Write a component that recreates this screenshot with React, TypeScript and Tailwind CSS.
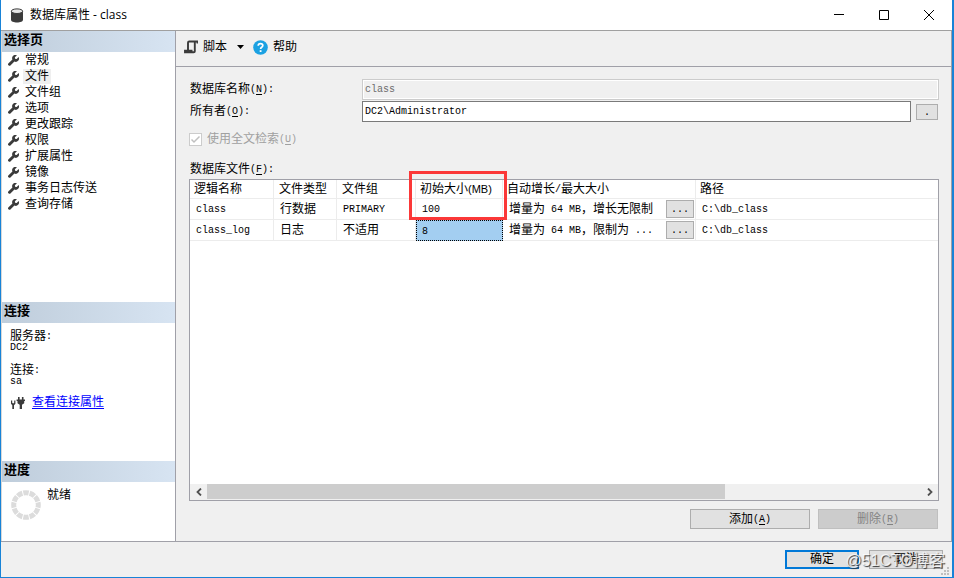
import { Fragment, type ReactNode } from 'react';

const pages = ['常规', '文件', '文件组', '选项', '更改跟踪', '权限', '扩展属性', '镜像', '事务日志传送', '查询存储'];

const files = [
  { name: 'class', type: '行数据', group: 'PRIMARY', size: '100', growth: ['增量为', ' 64 MB', '\uff0c增长无限制'], path: 'C:\\db_class' },
  { name: 'class_log', type: '日志', group: '不适用', size: '8', growth: ['增量为', ' 64 MB', '\uff0c限制为', ' ...'], path: 'C:\\db_class' },
];

const cell = 'border-r border-b border-[#ececec] p-0 pl-[6px] text-left font-normal whitespace-nowrap overflow-hidden';

// Half-width text sits in a smaller monospace next to the 12px Chinese glyphs
function Latin({ children }: { children: ReactNode }) {
  return <span className="align-[1px] font-['Liberation_Mono',monospace] text-[10px] leading-none whitespace-pre">{children}</span>;
}

function Key({ letter, colon }: { letter: string; colon?: boolean }) {
  return (
    <Latin>
      (<u className="underline-offset-2">{letter}</u>){colon && ':'}
    </Latin>
  );
}

function WrenchIcon() {
  return (
    <svg className="mr-1 size-[11px] text-[#3b3b3b]" viewBox="0 0 12 12" fill="currentColor">
      <path d="M9.800.400A3.500 3.500 0 0 0 4.800 4.800L.600 8.900A1.500 1.500 0 0 0 2.900 11.300L7 7.100A3.500 3.500 0 0 0 11.600 2.300L9.500 4.400L7.700 4.200L7.500 2.500z" />
    </svg>
  );
}

function PanelTitle({ children }: { children: ReactNode }) {
  return (
    <h2 className="h-[21px] bg-linear-to-r from-[#bfcddb] to-[#d7e4f2] pl-[2px] text-[13px] leading-[18px] font-bold">
      {children}
    </h2>
  );
}

function TitleBar() {
  return (
    <header className="flex h-[31px] items-center border-b border-[#a0a0a0] bg-white pl-[9px]">
      <svg className="mr-[6px] h-[15px] w-[14px]" viewBox="0 0 14 15">
        <path d="M1 3.200v8.600C1 13.500 3.700 14.600 7 14.600s6-1.100 6-2.800V3.200z" fill="#3b3b3b" />
        <ellipse cx="7" cy="3.200" rx="5.700" ry="2.300" fill="#e6e6e6" stroke="#3b3b3b" />
      </svg>
      <h1 className="flex-1 font-['Open_Sans','Noto_Sans_CJK_SC',sans-serif] text-[12px] leading-[16px]">数据库属性 - class</h1>
      <div className="flex">
        <button aria-label="最小化" className="flex h-[29px] w-[45px] items-center justify-center">
          <svg width="10" height="10" viewBox="0 0 10 10" stroke="#000"><path d="M0 4.500h10" /></svg>
        </button>
        <button aria-label="最大化" className="flex h-[29px] w-[45px] items-center justify-center">
          <svg width="10" height="10" viewBox="0 0 10 10" stroke="#000" fill="none"><path d="M.5.5h9v9h-9z" /></svg>
        </button>
        <button aria-label="关闭" className="flex h-[29px] w-[46px] items-center justify-center">
          <svg width="10" height="10" viewBox="0 0 10 10" stroke="#000"><path d="M0 0l10 10M10 0L0 10" /></svg>
        </button>
      </div>
    </header>
  );
}

function Sidebar() {
  return (
    <aside className="flex w-[175px] shrink-0 flex-col border-r border-l border-[#a0a0a8] border-l-[#d8d8d8] bg-white">
      <PanelTitle>选择页</PanelTitle>
      <nav className="flex-1">
        <ul>
          {pages.map((page) => (
            <li key={page} className="flex h-4 items-center pl-[6px]">
              <WrenchIcon />
              <button className={page === '文件' ? 'bg-[#efefef] px-[2px] leading-[15px]' : 'px-[2px] leading-[15px]'}>{page}</button>
            </li>
          ))}
        </ul>
      </nav>

      <PanelTitle>连接</PanelTitle>
      <div className="h-[138px] pt-[7px] pl-2">
        <p className="leading-[12px]">服务器<Latin>:</Latin></p>
        <p className="flex h-[12px] items-center"><Latin>DC2</Latin></p>
        <p className="mt-[10px] leading-[12px]">连接<Latin>:</Latin></p>
        <p className="flex h-[12px] items-center"><Latin>sa</Latin></p>
        <p className="mt-[6px] flex items-center gap-[7px]">
          <svg className="mt-px h-[14px] w-[15px]" viewBox="0 0 15 14" fill="#3b3b3b">
            <path d="M1 4.500h1.200v2.300l1 .7 1-.7V4.500h1.200v3.300L4 9.200V13H2.300V9.200L1 7.800z" />
            <path d="M8 1h1.600v2.500h2.300V1h1.600v2.500H15V5h-.8v2.300L12 8.800V13H9.700V8.800L7.500 7.300V5h-.9V3.500H8z" />
          </svg>
          <a href="#connection" className="leading-[16px] text-[#0000ff] underline underline-offset-2">查看连接属性</a>
        </p>
      </div>

      <PanelTitle>进度</PanelTitle>
      <div className="flex h-[59px] gap-[6px] pt-[6px] pl-[9px]">
        <svg className="mt-[2px] size-[30px]" viewBox="0 0 30 30">
          <circle cx="15" cy="15" r="12.300" fill="none" stroke="#dcdcdc" strokeWidth="5" pathLength="120" strokeDasharray="8.500 1.500" strokeDashoffset="4.250" />
        </svg>
        <span className="leading-[15px]">就绪</span>
      </div>
    </aside>
  );
}

function Toolbar() {
  return (
    <div className="flex h-[36px] items-center border-b border-[#a0a0a8] pb-[3px] pl-[8px]">
      <button className="flex items-center gap-[5px]">
        <svg width="14" height="14" viewBox="0 0 14 14" fill="none" stroke="#3b3b3b" strokeWidth="1.900">
          <path d="M13.500 3.500V1.500H5.200Q4 1.500 4 2.700V10.500" />
          <path d="M10.800 1.800V11.200Q10.800 12.300 9.700 12.300H1V10.800H8.500" />
        </svg>
        脚本
      </button>
      <button aria-label="脚本选项" className="ml-[9px] flex h-5 w-[9px] items-center justify-center">
        <svg width="7" height="4" viewBox="0 0 7 4"><path d="M0 0h7L3.500 4z" /></svg>
      </button>
      <button className="ml-[8px] flex items-center gap-[5px]">
        <svg width="15" height="15" viewBox="0 0 15 15">
          <circle cx="7.500" cy="7.500" r="7.300" fill="#1ba1e2" />
          <path d="M5.200 5.800Q5.200 3.700 7.500 3.700T9.800 5.600Q9.800 6.600 8.700 7.300T7.600 9" fill="none" stroke="#fff" strokeWidth="1.700" />
          <path d="M6.700 10.200h1.800v1.800H6.700z" fill="#fff" />
        </svg>
        帮助
      </button>
    </div>
  );
}

function FileGrid() {
  return (
    <div className="flex flex-1 flex-col border border-[#a0a0a8] bg-white">
      <div className="flex-1">
        <table aria-labelledby="files-label" className="w-full table-fixed border-separate border-spacing-0">
          <thead>
            <tr className="h-[19px] leading-[16px]">
              <th className={`${cell} w-[84px] !pl-[4px]`}>逻辑名称</th>
              <th className={`${cell} w-[63px] !pl-[5px]`}>文件类型</th>
              <th className={`${cell} w-[79px] !pl-[5px]`}>文件组</th>
              <th className={`${cell} relative w-[87px] !overflow-visible !pl-[4px]`}>
                初始大小<span className="text-[11px] leading-none">(MB)</span>
                <span className="pointer-events-none absolute -top-[9px] -left-[7px] h-[49px] w-[98px] border-3 border-[#fb3838]" />
              </th>
              <th className={`${cell} w-[193px] !pl-[4px]`}>自动增长<Latin>/</Latin>最大大小</th>
              <th className={`${cell} border-r-0 !pl-[4px]`}>路径</th>
            </tr>
          </thead>
          <tbody>
            {files.map((file, i) => (
              <tr key={file.name} className="h-[21px] leading-[16px]">
                <td className={cell}><Latin>{file.name}</Latin></td>
                <td className={cell}>{file.type}</td>
                <td className={cell}>{i === 0 ? <Latin>{file.group}</Latin> : file.group}</td>
                <td className={i === 1 ? 'border border-dotted border-black bg-[#a3cef1] p-0 pl-[5px]' : cell}>
                  <Latin>{file.size}</Latin>
                </td>
                <td className={cell}>
                  <div className="flex items-center justify-between pr-px">
                    <span>
                      {file.growth.map((part, n) => (
                        <Fragment key={n}>{n % 2 ? <Latin>{part}</Latin> : part}</Fragment>
                      ))}
                    </span>
                    <button aria-label={`更改 ${file.name} 的自动增长`} className="h-[18px] w-[28px] border border-[#adadad] bg-[#e1e1e1] leading-[16px]">
                      <Latin>...</Latin>
                    </button>
                  </div>
                </td>
                <td className={`${cell} border-r-0`}><Latin>{file.path}</Latin></td>
              </tr>
            ))}
          </tbody>
        </table>
      </div>
      <div className="flex h-4 bg-[#f0f0f0]">
        <button aria-label="向左滚动" className="flex w-[17px] items-center justify-center">
          <svg width="6" height="8" viewBox="0 0 6 8" fill="none" stroke="#505050" strokeWidth="1.800"><path d="M5 .5L1.500 4 5 7.500" /></svg>
        </button>
        <div className="flex-1 pb-px"><div className="h-full w-[72.500%] bg-[#cdcdcd]" /></div>
        <button aria-label="向右滚动" className="flex w-[17px] items-center justify-center">
          <svg width="6" height="8" viewBox="0 0 6 8" fill="none" stroke="#505050" strokeWidth="1.800"><path d="M1 .5L4.500 4 1 7.500" /></svg>
        </button>
      </div>
    </div>
  );
}

function GeneralForm() {
  return (
    <div className="flex flex-1 flex-col py-3 pr-3 pl-[13px]">
      <div className="flex items-center">
        <label htmlFor="db-name" className="w-[173px] pb-[2px] pl-px">数据库名称<Key letter="N" colon /></label>
        <input id="db-name" disabled defaultValue="class" className="h-[21px] min-w-0 flex-1 border border-[#cccccc] bg-[#f0f0f0] px-[2px] font-['Liberation_Mono',monospace] text-[10px] text-[#6d6d6d] inset-ring inset-ring-white" />
      </div>
      <div className="mt-px flex items-center">
        <label htmlFor="owner" className="w-[173px] pb-[2px] pl-px">所有者<Key letter="O" colon /></label>
        <input id="owner" defaultValue="DC2\Administrator" className="h-[21px] min-w-0 flex-1 border border-[#7a7a7a] bg-white px-[2px] font-['Liberation_Mono',monospace] text-[10px]" />
        <button aria-label="浏览所有者" className="mr-px ml-[5px] h-[16px] w-[22px] border border-[#adadad] bg-[#e1e1e1] leading-[14px]">
          <Latin>.</Latin>
        </button>
      </div>
      <label className="mt-2 flex h-[18px] items-center gap-[5px] text-[#a0a0a0]">
        <span className="relative flex">
          <input type="checkbox" disabled defaultChecked className="size-[13px] appearance-none border border-[#cccccc] bg-white" />
          <svg className="absolute inset-0" width="13" height="13" viewBox="0 0 13 13" fill="none" stroke="#c0c0c0" strokeWidth="1.500"><path d="M2.500 6.500L5 9l5.500-5.500" /></svg>
        </span>
        <span>使用全文检索<Key letter="U" /></span>
      </label>
      <p id="files-label" className="mt-3 pl-px leading-[19px]">数据库文件<Key letter="F" colon /></p>
      <FileGrid />
      <div className="mt-2 mr-px flex justify-end gap-2">
        <button className="h-[20px] w-[120px] border border-[#adadad] bg-[#e1e1e1] leading-[18px]">添加<Key letter="A" /></button>
        <button disabled className="h-[20px] w-[120px] border border-[#bfbfbf] bg-[#cccccc] leading-[18px] text-[#838383]">删除<Key letter="R" /></button>
      </div>
    </div>
  );
}

export default function App() {
  return (
    <div className="relative flex min-h-screen flex-col border-r-2 border-b border-l border-[#1883d7] bg-[#f0f0f0] font-['Liberation_Sans','Noto_Sans_CJK_SC',sans-serif] text-[12px] leading-[16px] text-black">
      <TitleBar />
      <div className="flex flex-1 border-b border-[#a0a0a8]">
        <Sidebar />
        <main className="flex min-w-0 flex-1 flex-col border-r border-[#a0a0a8]">
          <Toolbar />
          <GeneralForm />
        </main>
      </div>
      <footer className="flex h-[35px] items-center justify-end gap-[10px] pr-[9px]">
        <button className="h-[19px] w-[74px] border-2 border-[#0078d7] bg-[#e1e1e1] leading-[15px]">确定</button>
        <button className="h-[19px] w-[74px] border border-[#adadad] bg-[#e1e1e1] leading-[17px]">取消</button>
      </footer>
      <svg className="absolute right-[2px] bottom-px" width="9" height="9" viewBox="0 0 9 9" fill="#bfbfbf">
        <path d="M6 0h2v2H6zM3 3h2v2H3zM6 3h2v2H6zM0 6h2v2H0zM3 6h2v2H3zM6 6h2v2H6z" />
      </svg>
      <span className="pointer-events-none absolute right-[7px] bottom-[5px] text-[16px] leading-[22px] whitespace-nowrap text-white/80 [text-shadow:1px_1px_1px_#333]">
        @51CTO博客
      </span>
    </div>
  );
}
